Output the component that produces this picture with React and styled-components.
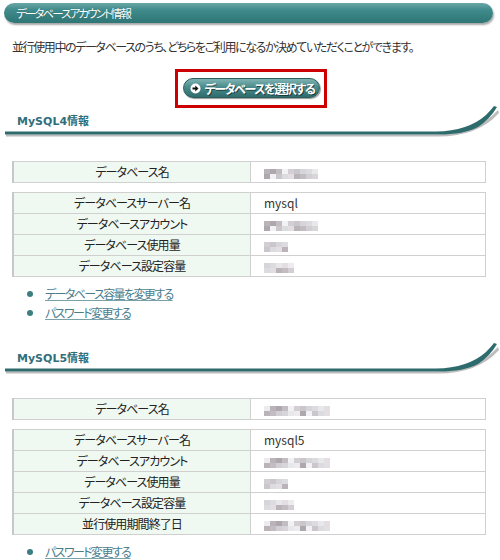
import React from 'react'
import styled, { createGlobalStyle } from 'styled-components'

const GlobalStyle = createGlobalStyle`
  body {
    margin: 0;
    background: #fff;
    font-family: "Noto Sans CJK JP", "Liberation Sans", sans-serif;
    font-size: 12px;
    color: #333;
    font-feature-settings: "palt";
  }
`

const Page = styled.div`
  width: 500px;
  padding-top: 3px;
  display: flex;
  flex-direction: column;
`

const TitleBar = styled.div`
  margin: 0 7px 0 4px;
  height: 20px;
  border-radius: 10px;
  background: linear-gradient(#6aa7a7 0%, #3f8a8a 35%, #2f7676 100%);
  box-shadow: 1px 2px 2px rgba(0, 0, 0, 0.35);
  color: #fff;
  display: flex;
  align-items: center;
  padding-left: 12px;
  font-size: 11.5px;
  letter-spacing: -1.9px;
  text-shadow: 0 0 1px rgba(0, 0, 0, 0.3);
`

const Lead = styled.p`
  margin: 16px 0 0;
  padding-left: 12px;
  line-height: 16px;
  letter-spacing: -1.4px;
  color: #333;
`

const Highlight = styled.div`
  align-self: center;
  margin-top: 14px;
  margin-left: 1px;
  border: 3px solid #cc0000;
  padding: 6px 4px 7px 5px;
  display: flex;
`

const SelectButton = styled.button`
  height: 20px;
  width: 137px;
  border-radius: 10px;
  border: 1px solid #2c5e5e;
  background: linear-gradient(#7fb3b3 0%, #4a8b8b 45%, #2f6c6d 100%);
  box-shadow: 1px 1px 1px rgba(0, 0, 0, 0.4);
  color: #fff;
  font-family: inherit;
  font-feature-settings: "palt";
  font-size: 12px;
  font-weight: bold;
  letter-spacing: -1.4px;
  white-space: nowrap;
  text-shadow: 1px 1px 0 rgba(0, 0, 0, 0.5);
  display: flex;
  align-items: center;
  gap: 4px;
  padding: 0 0 0 6px;
  cursor: pointer;
`

const Heading = styled.div`
  position: relative;
  height: 30px;
  margin-top: ${({ $top }) => $top}px;
`

const HeadingText = styled.div`
  position: relative;
  padding: 9px 0 0 17px;
  line-height: 16px;
  font-family: "DejaVu Sans", "Noto Sans CJK JP", sans-serif;
  font-feature-settings: normal;
  font-weight: bold;
  font-size: 11px;
  color: #2f6f7c;
`

const Swoosh = styled.svg`
  position: absolute;
  left: 0;
  top: 0;
`

const Table = styled.table`
  margin: ${({ $top }) => $top}px 0 0 12px;
  width: 474px;
  border-collapse: collapse;
  border: 1px solid #c4c4c4;
  border-left: 2px solid #c8c8c8;
`

const Label = styled.td`
  width: 236px;
  height: 20px;
  padding: 0;
  background: #f0f9f1;
  border: 1px solid #d0d0d0;
  text-align: center;
  color: #222;
  letter-spacing: -0.9px;
  line-height: 20px;
`

const Value = styled.td`
  height: 20px;
  padding: 0 0 0 13px;
  border: 1px solid #d0d0d0;
  color: #333;
  line-height: 20px;
`

const Mosaic = styled.span`
  display: inline-grid;
  grid-auto-flow: column;
  grid-template-rows: 5px 5px;
  vertical-align: middle;
  filter: blur(0.5px);
`

const Tile = styled.span`
  width: 6px;
  background: ${({ $c }) => $c};
`

const Links = styled.ul`
  list-style: none;
  margin: ${({ $top }) => $top}px 0 0;
  padding: 0 0 0 27px;
`

const LinkItem = styled.li`
  display: flex;
  align-items: center;
  height: 19px;
  gap: 12px;
`

const Dot = styled.span`
  width: 6px;
  height: 6px;
  border-radius: 50%;
  background: #3d7f80;
`

const TextLink = styled.a`
  color: #4a7d8c;
  letter-spacing: -1.6px;
  text-decoration: underline;
  text-decoration-color: #7aa0aa;
`

const shades = ['#dcdce0', '#bab4b8', '#d3ced4', '#e8e8eb', '#aea8ae', '#cbc6cc', '#e2dee2', '#c2bdc2', '#d6d6da', '#ececef', '#f2f2f4']

const Blur = ({ w }) => {
  const n = Math.round(w / 6) * 2
  return (
    <Mosaic>
      {Array.from({ length: n }, (_, i) => (
        <Tile key={i} $c={i % 2 ? shades[(i * 3 + w) % shades.length] : shades[(i * 7 + w) % shades.length]} />
      ))}
    </Mosaic>
  )
}

const SectionHeading = ({ title, top }) => (
  <Heading $top={top}>
    <Swoosh width="500" height="32" viewBox="0 0 500 32">
      <path d="M6 29.5 L438 29.5 Q475 29.5 498 5 L499 8 Q478 31.5 438 31.5 L6 31.5 Z" fill="#bcbcbc" />
      <path d="M5 26.5 L436 26.5 Q468 26 486 10 Q491 5 494 1 L497 2 Q490 14 478 22 Q464 29.5 438 29.5 L5 29.5 Z" fill="#2e6b6c" />
    </Swoosh>
    <HeadingText>{title}</HeadingText>
  </Heading>
)

const ArrowIcon = () => (
  <svg width="11" height="11" viewBox="0 0 11 11">
    <circle cx="5.5" cy="5.5" r="5" fill="#fff" />
    <path d="M2.5 4.6 H5.3 V2.6 L8.5 5.5 L5.3 8.4 V6.4 H2.5 Z" fill="#111" />
  </svg>
)

const sections = [
  {
    title: 'MySQL4情報',
    top: -3,
    name: 56,
    rows: [
      ['データベースサーバー名', 'mysql'],
      ['データベースアカウント', 56],
      ['データベース使用量', 24],
      ['データベース設定容量', 30],
    ],
    links: ['データベース容量を変更する', 'パスワード変更する'],
  },
  {
    title: 'MySQL5情報',
    top: 20,
    name: 64,
    rows: [
      ['データベースサーバー名', 'mysql5'],
      ['データベースアカウント', 64],
      ['データベース使用量', 24],
      ['データベース設定容量', 30],
      ['並行使用期間終了日', 64],
    ],
    links: ['パスワード変更する'],
  },
]

const Section = ({ data }) => (
  <>
    <SectionHeading title={data.title} top={data.top} />
    <Table $top={26}>
      <tbody>
        <tr>
          <Label>データベース名</Label>
          <Value><Blur w={data.name} /></Value>
        </tr>
      </tbody>
    </Table>
    <Table $top={9}>
      <tbody>
        {data.rows.map(([label, value]) => (
          <tr key={label}>
            <Label>{label}</Label>
            <Value>{typeof value === 'string' ? value : <Blur w={value} />}</Value>
          </tr>
        ))}
      </tbody>
    </Table>
    <Links $top={7}>
      {data.links.map(link => (
        <LinkItem key={link}>
          <Dot />
          <TextLink href="#">{link}</TextLink>
        </LinkItem>
      ))}
    </Links>
  </>
)

export default function App() {
  return (
    <>
      <GlobalStyle />
      <Page>
        <TitleBar>データベースアカウント情報</TitleBar>
        <Lead>並行使用中のデータベースのうち、どちらをご利用になるか決めていただくことができます。</Lead>
        <Highlight>
          <SelectButton>
            <ArrowIcon />
            データベースを選択する
          </SelectButton>
        </Highlight>
        {sections.map(s => (
          <Section key={s.title} data={s} />
        ))}
      </Page>
    </>
  )
}
